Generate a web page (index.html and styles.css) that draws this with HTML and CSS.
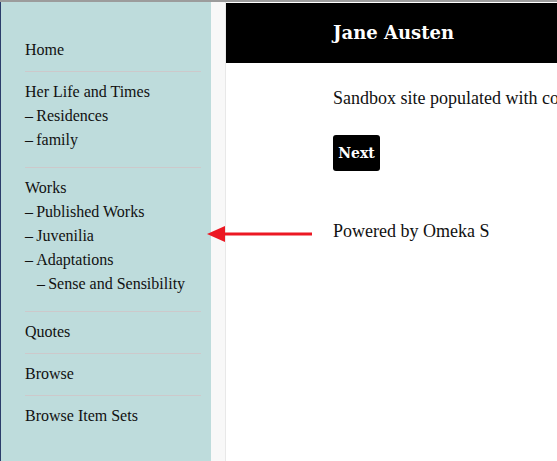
FILE: index.html
```html
<!DOCTYPE html>
<html lang="en">
<head>
<meta charset="utf-8">
<title>Jane Austen</title>
<link rel="stylesheet" href="styles.css">
</head>
<body>
<div class="page">
  <aside class="sidebar">
    <ul class="nav">
      <li class="nav-item">Home</li>
      <li class="nav-item">Her Life and Times
        <ul class="sub">
          <li>Residences</li>
          <li>family</li>
        </ul>
      </li>
      <li class="nav-item">Works
        <ul class="sub">
          <li>Published Works</li>
          <li>Juvenilia</li>
          <li>Adaptations
            <ul class="sub sub-inner">
              <li>Sense and Sensibility</li>
            </ul>
          </li>
        </ul>
      </li>
      <li class="nav-item">Quotes</li>
      <li class="nav-item">Browse</li>
      <li class="nav-item last">Browse Item Sets</li>
    </ul>
  </aside>
  <div class="gutter"></div>
  <main class="main">
    <header class="site-header">Jane Austen</header>
    <div class="content">
      <p class="intro">Sandbox site populated with content</p>
      <a class="next-btn">Next</a>
      <p class="powered">Powered by Omeka S</p>
    </div>
  </main>
  <svg class="arrow" width="110" height="20" viewBox="0 0 110 20">
    <polygon points="0,10 18,2 18,18" fill="#ec1823"/>
    <rect x="14" y="8.5" width="91" height="3" fill="#ec1823"/>
  </svg>
</div>
</body>
</html>
```

FILE: styles.css
```css
* { box-sizing: border-box; }
html, body { margin: 0; padding: 0; }
body {
  background: #fff;
  border-top: 2px solid #9c9c9c;
  font-family: "Liberation Serif", "DejaVu Serif", serif;
  color: #111;
}
.page {
  position: relative;
  display: flex;
  height: 459px;
  overflow: hidden;
  border-left: 1px solid #2b3d6b;
}
.sidebar {
  width: 210px;
  flex: none;
  background: #bedcdc;
  padding: 28px 10px 0 24px;
}
.nav, .sub {
  list-style: none;
  margin: 0;
  padding: 0;
}
.nav {
  font-size: 16px;
  line-height: 24px;
}
.nav-item {
  padding: 8px 0 9px;
  border-bottom: 1px solid #cdc9cb;
}
.nav-item.last { border-bottom: none; }
.sub { margin-bottom: 6px; }
.sub .sub { margin-bottom: 0; padding-left: 12px; }
.sub li::before { content: "\2013\2009"; }
.gutter {
  width: 15px;
  flex: none;
  background: #f8f8f8;
  border-right: 1px solid #e8e8e8;
}
.main {
  flex: 1;
  min-width: 0;
  overflow: hidden;
}
.site-header {
  margin-top: 1px;
  height: 60px;
  background: #000;
  color: #fff;
  font-family: "DejaVu Serif", serif;
  font-weight: bold;
  font-size: 18px;
  line-height: 60px;
  padding-left: 107px;
  white-space: nowrap;
}
.content {
  padding-left: 107px;
  white-space: nowrap;
  font-size: 18px;
  line-height: 24px;
}
.intro { margin: 23px 0 0; }
.next-btn {
  display: inline-flex;
  align-items: center;
  justify-content: center;
  margin-top: 25px;
  width: 47px;
  height: 36px;
  background: #000;
  color: #fff;
  border-radius: 3px;
  font-family: "DejaVu Serif", serif;
  font-weight: bold;
  font-size: 14px;
}
.powered { margin: 48px 0 0; }
.arrow {
  position: absolute;
  left: 206px;
  top: 222px;
}
```
